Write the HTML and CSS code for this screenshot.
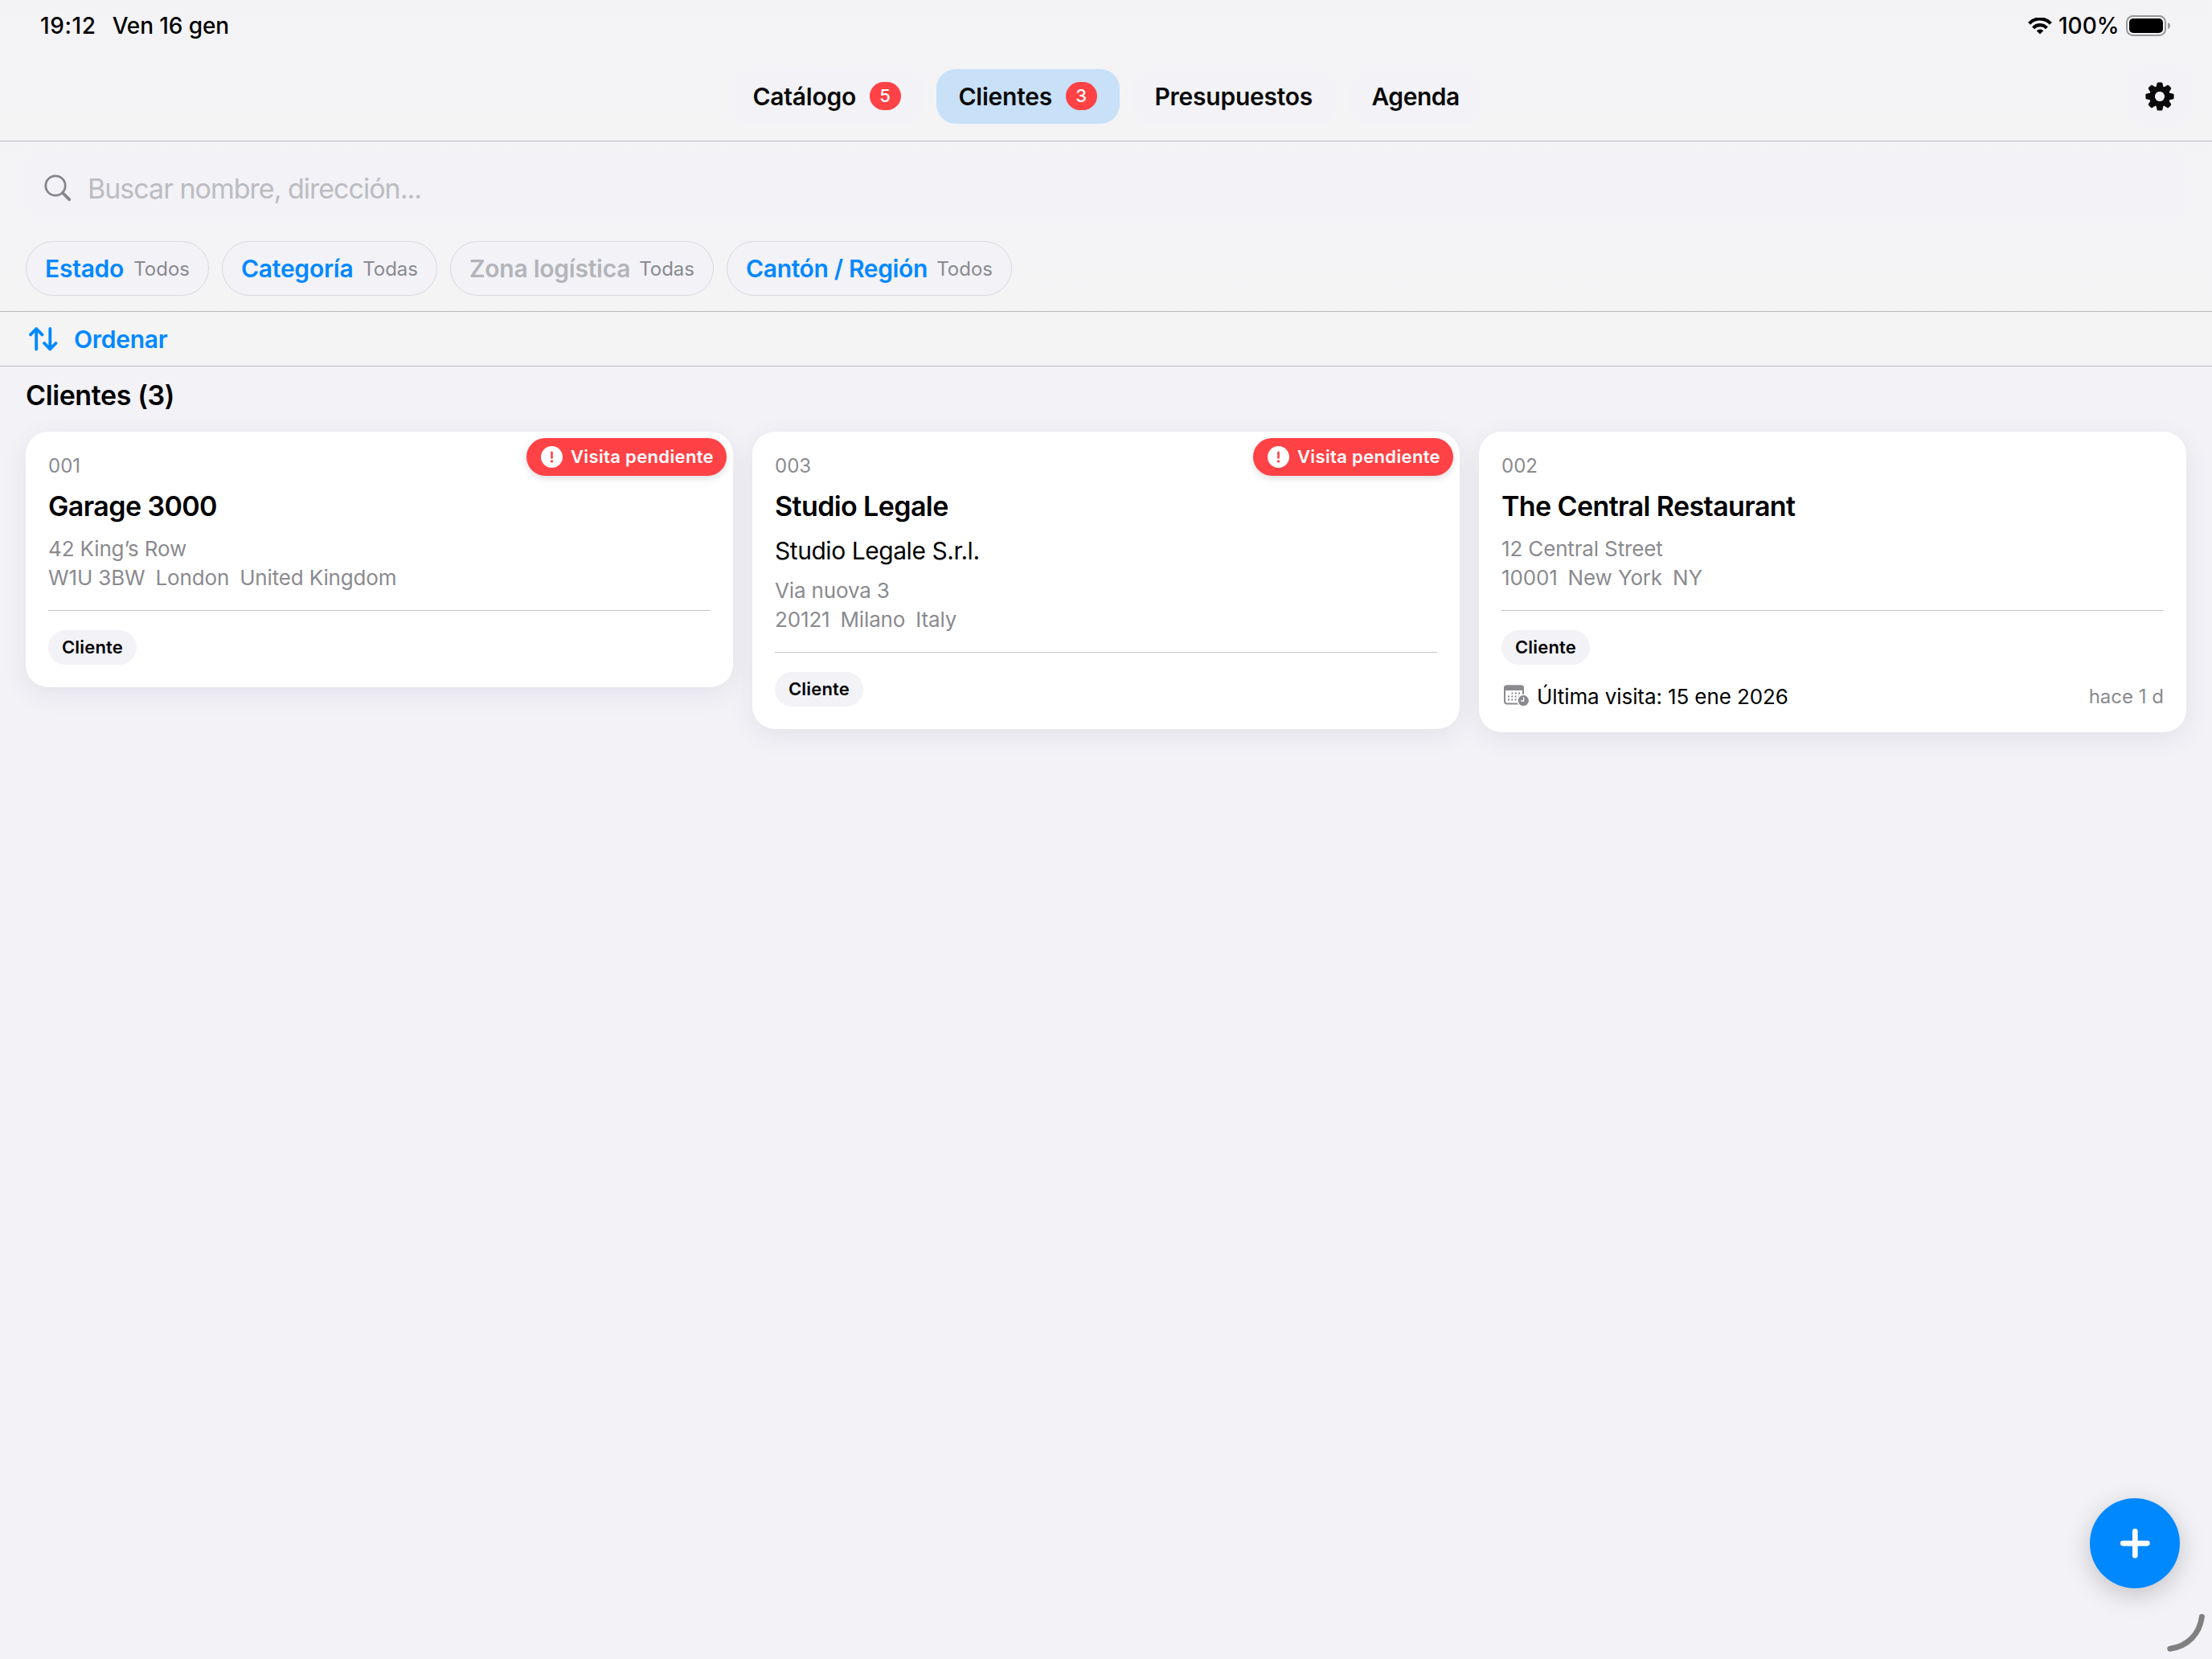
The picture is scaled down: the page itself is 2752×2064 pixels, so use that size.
FILE: index.html
```html
<!DOCTYPE html>
<html lang="es">
<head>
    <meta charset="UTF-8">
    <meta name="viewport" content="width=device-width, initial-scale=1.0">
    <title>Clientes</title>
    <link rel="stylesheet" href="styles.css">
</head>
<body>
    <header class="header">
        <div class="status-bar">
            <div class="status-left">
                <span class="time">19:12</span>
                <span class="date">Ven 16 gen</span>
            </div>
            <div class="status-right">
                <svg class="wifi" width="30" height="21" viewBox="0 0 30 21">
                    <path d="M1.6 7.2 A18.5 18.5 0 0 1 28.4 7.2" fill="none" stroke="#000" stroke-width="4.2"/>
                    <path d="M6.6 12.8 A11.3 11.3 0 0 1 23.4 12.8" fill="none" stroke="#000" stroke-width="4.2"/>
                    <path d="M15 20.4 L10.7 16.3 A6.2 6.2 0 0 1 19.3 16.3 Z"/>
                </svg>
                <span class="battery-text">100%</span>
                <svg class="battery" width="56" height="26" viewBox="0 0 56 26">
                    <rect x="1" y="1" width="48" height="24" rx="7.5" fill="none" stroke="#98989a" stroke-width="2"/>
                    <rect x="4" y="4" width="42" height="18" rx="5"/>
                    <path d="M52 9 Q55 10 55 13 Q55 16 52 17 Z" fill="#98989a"/>
                </svg>
            </div>
        </div>
        <div class="nav-row">
            <nav class="tabs">
                <button class="tab tab-catalogo">Catálogo <span class="count">5</span></button>
                <button class="tab tab-clientes active">Clientes <span class="count">3</span></button>
                <button class="tab tab-presupuestos">Presupuestos</button>
                <button class="tab tab-agenda">Agenda</button>
            </nav>
            <button class="settings">
                <svg width="36" height="36" viewBox="-18 -18 36 36">
                    <g fill="#0a0a0a">
                        <path id="tooth" d="M-4.6 -11 L-3.4 -16.4 Q-3 -17.6 -1.8 -17.6 H1.8 Q3 -17.6 3.4 -16.4 L4.6 -11 Z"/>
                        <use href="#tooth" transform="rotate(45)"/>
                        <use href="#tooth" transform="rotate(90)"/>
                        <use href="#tooth" transform="rotate(135)"/>
                        <use href="#tooth" transform="rotate(180)"/>
                        <use href="#tooth" transform="rotate(225)"/>
                        <use href="#tooth" transform="rotate(270)"/>
                        <use href="#tooth" transform="rotate(315)"/>
                    </g>
                    <circle r="9.4" fill="none" stroke="#0a0a0a" stroke-width="7"/>
                    <circle r="5.9" fill="#f2f2f7"/>
                </svg>
            </button>
        </div>
    </header>

    <section class="filters">
        <div class="search">
            <svg width="34" height="34" viewBox="0 0 34 34" fill="none" stroke="#85858b">
                <circle cx="14" cy="14" r="12.2" stroke-width="2.8"/>
                <path d="M23 23 L31.2 31.2" stroke-width="3.8" stroke-linecap="round"/>
            </svg>
            <span class="placeholder">Buscar nombre, dirección...</span>
        </div>
        <div class="chips">
            <div class="chip chip-estado"><b>Estado</b><span>Todos</span></div>
            <div class="chip chip-categoria"><b>Categoría</b><span>Todas</span></div>
            <div class="chip chip-zona disabled"><b>Zona logística</b><span>Todas</span></div>
            <div class="chip chip-canton"><b>Cantón / Región</b><span>Todos</span></div>
        </div>
    </section>

    <div class="sort-bar">
        <svg width="36" height="30" viewBox="0 0 36 30" fill="none" stroke="#0088ff" stroke-width="3.8" stroke-linecap="round" stroke-linejoin="round">
            <path d="M9.2 27.4 V2 M2 9.4 L9.2 2 L16.4 9.4"/>
            <path d="M26.3 2 V27.4 M19.1 20 L26.3 27.4 L33.5 20"/>
        </svg>
        <span>Ordenar</span>
    </div>

    <main class="content">
        <h1>Clientes (3)</h1>
        <div class="cards">
            <article class="card">
                <div class="visit-badge">
                    <svg width="27" height="27" viewBox="0 0 27 27">
                        <circle cx="13.5" cy="13.5" r="13.5" fill="#fff"/>
                        <path d="M13.5 7.8 V14.6" stroke="#ff4245" stroke-width="2.6" stroke-linecap="round"/>
                        <circle cx="13.5" cy="18.9" r="1.7" fill="#ff4245"/>
                    </svg>
                    <span>Visita pendiente</span>
                </div>
                <div class="code">001</div>
                <h2>Garage 3000</h2>
                <div class="address">
                    <div>42 King’s Row</div>
                    <div class="city"><span>W1U 3BW</span><span>London</span><span>United Kingdom</span></div>
                </div>
                <hr>
                <span class="tag">Cliente</span>
            </article>

            <article class="card">
                <div class="visit-badge">
                    <svg width="27" height="27" viewBox="0 0 27 27">
                        <circle cx="13.5" cy="13.5" r="13.5" fill="#fff"/>
                        <path d="M13.5 7.8 V14.6" stroke="#ff4245" stroke-width="2.6" stroke-linecap="round"/>
                        <circle cx="13.5" cy="18.9" r="1.7" fill="#ff4245"/>
                    </svg>
                    <span>Visita pendiente</span>
                </div>
                <div class="code">003</div>
                <h2>Studio Legale</h2>
                <div class="company">Studio Legale S.r.l.</div>
                <div class="address">
                    <div>Via nuova 3</div>
                    <div class="city"><span>20121</span><span>Milano</span><span>Italy</span></div>
                </div>
                <hr>
                <span class="tag">Cliente</span>
            </article>

            <article class="card">
                <div class="code">002</div>
                <h2>The Central Restaurant</h2>
                <div class="address">
                    <div>12 Central Street</div>
                    <div class="city"><span>10001</span><span>New York</span><span>NY</span></div>
                </div>
                <hr>
                <span class="tag">Cliente</span>
                <div class="last-visit">
                    <svg width="32" height="28" viewBox="0 0 32 28">
                        <rect x="1" y="1.5" width="23" height="22" rx="3" fill="none" stroke="#8a8a8f" stroke-width="2"/>
                        <path d="M0 7 V4 Q0 .5 3.5 .5 H21.5 Q25 .5 25 4 V7 Z" fill="#8a8a8f"/>
                        <path d="M9.5 10.4 H22 M5 14.4 H22 M5 18.4 H18" stroke="#8a8a8f" stroke-width="2" stroke-dasharray="2 2.3"/>
                        <circle cx="24.3" cy="19.6" r="8" fill="#fff"/>
                        <circle cx="24.3" cy="19.6" r="6.6" fill="#8a8a8f"/>
                        <path d="M24.6 15.4 V20 H21.2" fill="none" stroke="#fff" stroke-width="1.4"/>
                    </svg>
                    <span class="visit-date">Última visita: 15 ene 2026</span>
                    <span class="ago">hace 1 d</span>
                </div>
            </article>
        </div>
    </main>

    <button class="fab">
        <svg width="38" height="38" viewBox="0 0 38 38" stroke="#fff" stroke-width="6.6" stroke-linecap="round">
            <path d="M19.3 4 V34.2 M4.2 19.1 H34.4"/>
        </svg>
    </button>
    <svg class="corner" width="52" height="52" viewBox="0 0 52 52">
        <path d="M45.4 7.4 C42.5 29 28 44 5.8 47.2" fill="none" stroke="#808080" stroke-width="7" stroke-linecap="round"/>
    </svg>
</body>
</html>
```

FILE: styles.css
```css
* {
    box-sizing: border-box;
}
body {
    margin: 0;
    min-height: 2064px;
    background-color: #f2f2f7;
    color: #000;
    font-family: Inter, "Liberation Sans", sans-serif;
    font-size: 26px;
    overflow: hidden;
}
svg {
    display: block;
    flex: none;
}
button {
    border: none;
    padding: 0;
    font-family: inherit;
    cursor: pointer;
}

/* Header */
.header {
    height: 176px;
    border-bottom: 1px solid #bbbbbe;
    background: linear-gradient(#f3f3f6, #f4f4f5);
}
.status-bar {
    display: flex;
    justify-content: space-between;
    height: 64px;
    padding: 0 51px 0 50px;
    font-size: 28px;
    font-weight: 500;
    line-height: 64px;
}
.status-left {
    display: flex;
    gap: 20px;
}
.time {
    letter-spacing: 0.6px;
}
.date {
    letter-spacing: -0.1px;
}
.status-right {
    display: flex;
    align-items: center;
}
.battery-text {
    margin-left: 8px;
    width: 84px;
}
.nav-row {
    display: grid;
    grid-template-columns: 1fr auto 1fr;
    align-items: center;
    height: 111px;
    padding: 0 25px;
}
.tabs {
    grid-column: 2;
    display: flex;
    gap: 16px;
}
.tab {
    display: flex;
    align-items: center;
    justify-content: space-between;
    height: 68px;
    padding: 0 28px;
    border-radius: 24px;
    background-color: #f2f2f7;
    color: #0a0a0a;
    font-size: 30px;
    font-weight: 600;
    letter-spacing: -0.25px;
}
.tab.active {
    background-color: #c8e0f8;
}
.tab-catalogo {
    width: 240px;
}
.tab-clientes {
    width: 228px;
}
.tab-presupuestos {
    width: 254px;
}
.tab-agenda {
    width: 165px;
    letter-spacing: -0.5px;
}
.count {
    width: 39px;
    height: 35px;
    border-radius: 18px;
    background-color: #ff4245;
    color: #fff;
    font-size: 22px;
    font-weight: 500;
    line-height: 35px;
    text-align: center;
}
.settings {
    grid-column: 3;
    justify-self: end;
    display: flex;
    align-items: center;
    justify-content: center;
    width: 80px;
    height: 78px;
    border-radius: 24px;
    background-color: #f2f2f7;
}

/* Search and filters */
.filters {
    height: 212px;
    padding: 16px 32px 0;
    border-bottom: 1px solid #bbbbbe;
    background: linear-gradient(#f3f3f6, #f4f4f5);
}
.search {
    display: flex;
    align-items: center;
    gap: 20px;
    height: 84px;
    padding-left: 23px;
    border-radius: 20px;
    background-color: #f2f2f7;
}
.placeholder {
    color: #bcbcc1;
    font-size: 34px;
    letter-spacing: -1px;
}
.chips {
    display: flex;
    gap: 16px;
    margin-top: 24px;
}
.chip {
    display: flex;
    align-items: center;
    justify-content: space-between;
    height: 68px;
    padding: 0 23px;
    border: 1px solid #dadade;
    border-radius: 34px;
    background-color: #f2f2f7;
}
.chip b {
    color: #0088ff;
    font-size: 30px;
    font-weight: 600;
    letter-spacing: -0.25px;
    white-space: nowrap;
}
.chip span {
    color: #8a8a8f;
    font-size: 24px;
}
.chip.disabled b {
    color: #b4b4ba;
}
.chip-estado {
    width: 228px;
}
.chip-categoria {
    width: 268px;
}
.chip-zona {
    width: 328px;
}
.chip-canton {
    width: 355px;
}
.chip-canton b {
    letter-spacing: -0.35px;
}
.sort-bar {
    display: flex;
    align-items: center;
    gap: 20px;
    height: 68px;
    padding-left: 36px;
    border-bottom: 1px solid #bbbbbe;
    background-color: #f4f4f5;
    color: #0088ff;
    font-size: 30px;
    font-weight: 600;
    letter-spacing: -0.25px;
}

/* Client list */
.content {
    padding: 0 32px;
}
h1 {
    height: 71px;
    margin: 0 0 10px;
    font-size: 34px;
    font-weight: 600;
    line-height: 72px;
    letter-spacing: -0.4px;
}
.cards {
    display: grid;
    grid-template-columns: repeat(3, 1fr);
    align-items: start;
    gap: 24px;
}
.card {
    position: relative;
    padding: 25px 28px 28px;
    border-radius: 28px;
    background-color: #fff;
    box-shadow: 0 8px 32px rgba(40, 40, 70, 0.08);
}
.visit-badge {
    position: absolute;
    top: 8px;
    right: 8px;
    display: flex;
    align-items: center;
    gap: 10px;
    width: 249px;
    height: 47px;
    padding-left: 18px;
    border-radius: 24px;
    background-color: #ff4245;
    box-shadow: 0 3px 8px rgba(0, 0, 0, 0.14);
    color: #fff;
    font-size: 22px;
    font-weight: 600;
    line-height: 26px;
    letter-spacing: 0.35px;
    white-space: nowrap;
}
.visit-badge span {
    padding-bottom: 1px;
}
.code {
    color: #8a8a8f;
    font-size: 24px;
    line-height: 36px;
}
h2 {
    margin: 11px 0 0;
    font-size: 34px;
    font-weight: 600;
    line-height: 42px;
    letter-spacing: -0.6px;
}
.company {
    margin-top: 14px;
    font-size: 30px;
    line-height: 40px;
    letter-spacing: -0.45px;
}
.address {
    margin-top: 14px;
    color: #8a8a8f;
    line-height: 36px;
    letter-spacing: -0.15px;
}
.company + .address {
    margin-top: 12px;
}
.city {
    display: flex;
    gap: 13px;
}
hr {
    height: 1px;
    margin: 22px 0 24px;
    border: none;
    background-color: #c4c4c7;
}
.tag {
    display: block;
    width: 110px;
    height: 43px;
    border-radius: 22px;
    background-color: #f2f2f7;
    font-size: 22px;
    font-weight: 600;
    line-height: 43px;
    letter-spacing: 0.2px;
    text-align: center;
}
.last-visit {
    display: flex;
    align-items: center;
    height: 34px;
    margin-top: 22px;
    padding-left: 3px;
}
.visit-date {
    margin-left: 9px;
    letter-spacing: -0.1px;
}
.ago {
    margin-left: auto;
    padding-top: 1px;
    color: #8a8a8f;
    font-size: 24px;
}

/* Floating add button and pencil corner handle */
.fab {
    position: fixed;
    right: 40px;
    bottom: 88px;
    display: flex;
    align-items: center;
    justify-content: center;
    width: 112px;
    height: 112px;
    border-radius: 50%;
    background-color: #0088ff;
    box-shadow: 0 8px 32px rgba(0, 0, 0, 0.2);
}
.corner {
    position: fixed;
    right: 6px;
    bottom: 8px;
}
```
